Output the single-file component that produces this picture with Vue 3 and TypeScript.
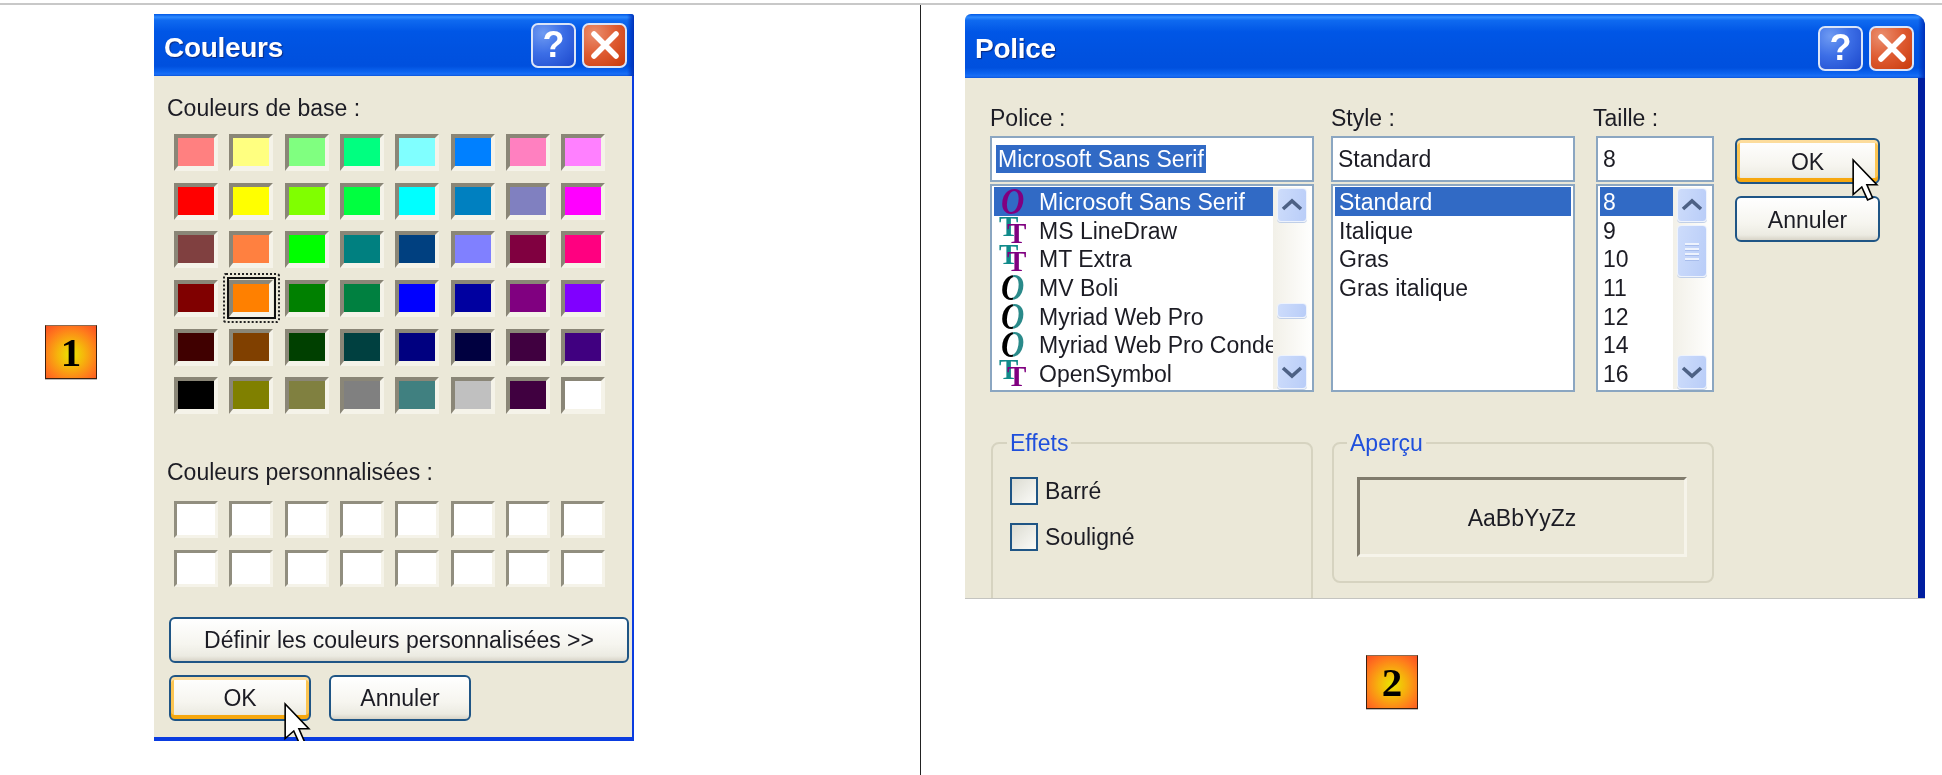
<script setup lang="ts">
interface FontRow { name: string; kind: 'o' | 't' }

const basics: string[] = [
  '#ff8080', '#ffff80', '#80ff80', '#00ff80', '#80ffff', '#0080ff', '#ff80c0', '#ff80ff',
  '#ff0000', '#ffff00', '#80ff00', '#00ff40', '#00ffff', '#0080c0', '#8080c0', '#ff00ff',
  '#804040', '#ff8040', '#00ff00', '#008080', '#004080', '#8080ff', '#800040', '#ff0080',
  '#800000', '#ff8000', '#008000', '#008040', '#0000ff', '#0000a0', '#800080', '#8000ff',
  '#400000', '#804000', '#004000', '#004040', '#000080', '#000040', '#400040', '#400080',
  '#000000', '#808000', '#808040', '#808080', '#408080', '#c0c0c0', '#400040', '#ffffff'
]
const selectedSwatch = 25
const customs: number[] = Array.from({ length: 16 }, (_, i) => i)

const fonts: FontRow[] = [
  { name: 'Microsoft Sans Serif', kind: 'o' },
  { name: 'MS LineDraw', kind: 't' },
  { name: 'MT Extra', kind: 't' },
  { name: 'MV Boli', kind: 'o' },
  { name: 'Myriad Web Pro', kind: 'o' },
  { name: 'Myriad Web Pro Condensed', kind: 'o' },
  { name: 'OpenSymbol', kind: 't' }
]
const styles: string[] = ['Standard', 'Italique', 'Gras', 'Gras italique']
const sizes: string[] = ['8', '9', '10', '11', '12', '14', '16']
</script>

<template>
  <div class="page">
    <div class="frame">
      <section class="side side-left">
        <div class="badge badge-one">1</div>

        <div class="dialog dialog-color">
          <header class="title title-color">
            <span class="title-text">Couleurs</span>
            <span class="caption-btn help">?</span>
            <span class="caption-btn close">
              <svg viewBox="0 0 40 40" width="40" height="40"><path d="M9 9 31 31M31 9 9 31" /></svg>
            </span>
          </header>
          <div class="body body-color">
            <div class="label">Couleurs de base :</div>
            <div class="swatches first">
              <div
                v-for="(c, i) in basics"
                :key="i"
                class="swatch"
                :class="{ picked: i === selectedSwatch }"
                :style="{ backgroundColor: c }"
              ></div>
            </div>
            <div class="label second">Couleurs personnalisées :</div>
            <div class="swatches custom">
              <div v-for="i in customs" :key="i" class="swatch blank"></div>
            </div>
            <button class="xp wide">Définir les couleurs personnalisées &gt;&gt;</button>
            <div class="actions">
              <button class="xp default small">OK</button>
              <button class="xp small">Annuler</button>
            </div>
          </div>
          <svg class="cursor cursor-left" viewBox="-1 -1 13 21" width="28" height="49">
            <path d="M0 0V16L4 12.5 6.7 18.5 9 17.5 6.4 11.5H11Z" />
          </svg>
        </div>
      </section>

      <section class="side side-right">
        <div class="dialog dialog-font">
          <header class="title title-font">
            <span class="title-text">Police</span>
            <span class="caption-btn help">?</span>
            <span class="caption-btn close">
              <svg viewBox="0 0 40 40" width="40" height="40"><path d="M9 9 31 31M31 9 9 31" /></svg>
            </span>
          </header>
          <div class="body body-font">
            <div class="columns">
              <div class="col col-font">
                <div class="label">Police :</div>
                <div class="input"><span class="hl">Microsoft Sans Serif</span></div>
                <div class="list">
                  <div class="rows">
                    <div v-for="(f, i) in fonts" :key="f.name" class="row font-row" :class="{ on: i === 0 }">
                      <span class="ficon">
                        <span v-if="f.kind === 'o'" class="ot" :class="{ purple: i === 0 }">O</span>
                        <template v-else><span class="tt a">T</span><span class="tt b">T</span></template>
                      </span>
                      <span class="fname">{{ f.name }}</span>
                    </div>
                  </div>
                  <div class="sb">
                    <span class="sb-btn up"><svg viewBox="0 0 22 14" width="22" height="14"><path d="M2 11 11 3 20 11" /></svg></span>
                    <span class="thumb thumb-font"></span>
                    <span class="sb-btn down"><svg viewBox="0 0 22 14" width="22" height="14"><path d="M2 3 11 11 20 3" /></svg></span>
                  </div>
                </div>
              </div>

              <div class="col col-style">
                <div class="label">Style :</div>
                <div class="input"><span class="plain">Standard</span></div>
                <div class="list">
                  <div class="rows">
                    <div v-for="(s, i) in styles" :key="s" class="row style-row" :class="{ on: i === 0 }">{{ s }}</div>
                  </div>
                </div>
              </div>

              <div class="col col-size">
                <div class="label shift">Taille :</div>
                <div class="input"><span class="plain tight">8</span></div>
                <div class="list">
                  <div class="rows">
                    <div v-for="(s, i) in sizes" :key="s" class="row size-row" :class="{ on: i === 0 }">{{ s }}</div>
                  </div>
                  <div class="sb">
                    <span class="sb-btn up"><svg viewBox="0 0 22 14" width="22" height="14"><path d="M2 11 11 3 20 11" /></svg></span>
                    <span class="thumb thumb-size"><i></i><i></i><i></i><i></i></span>
                    <span class="sb-btn down"><svg viewBox="0 0 22 14" width="22" height="14"><path d="M2 3 11 11 20 3" /></svg></span>
                  </div>
                </div>
              </div>

              <div class="col col-btn">
                <button class="xp default side-btn">OK</button>
                <button class="xp side-btn">Annuler</button>
              </div>
            </div>

            <div class="groups">
              <fieldset class="group effects">
                <legend>Effets</legend>
                <label class="check first-check"><span class="box"></span>Barré</label>
                <label class="check"><span class="box"></span>Souligné</label>
              </fieldset>
              <fieldset class="group preview-group">
                <legend>Aperçu</legend>
                <div class="preview">AaBbYyZz</div>
              </fieldset>
            </div>
          </div>
          <svg class="cursor cursor-right" viewBox="-1 -1 13 21" width="28" height="49">
            <path d="M0 0V16L4 12.5 6.7 18.5 9 17.5 6.4 11.5H11Z" />
          </svg>
        </div>
        <div class="badge badge-two">2</div>
      </section>
    </div>
  </div>
</template>

<style>
html, body { margin: 0; background: #fff; }
</style>

<style scoped>
.page {
  width: 1942px;
  height: 775px;
  padding-top: 3px;
  box-sizing: border-box;
  overflow: hidden;
  background: #fff;
  font-family: "Liberation Sans", Arial, sans-serif;
  font-size: 23px;
  color: #1c1c24;
}
.frame {
  display: flex;
  height: 772px;
  border-top: 2px solid #c8c8c8;
}
.side { box-sizing: border-box; }
.side-left {
  width: 921px;
  display: flex;
  align-items: flex-start;
  border-right: 1px solid #222;
  padding: 9px 0 0 45px;
}
.side-right {
  flex: 1;
  padding: 9px 0 0 44px;
}
.badge {
  box-sizing: border-box;
  width: 52px;
  height: 54px;
  border: 1px solid #3a2010;
  border-top-color: #8a6a50;
  background: radial-gradient(circle at 50% 55%, #e9e600 0, #f6b40c 35%, #ff7a1c 70%, #fb4f22 100%);
  color: #000;
  font-family: "Liberation Serif", serif;
  font-weight: 700;
  font-size: 41px;
  line-height: 52px;
  text-align: center;
  box-shadow: 0 1px 0 #bbb;
  filter: blur(.3px);
}
.badge-one { margin-top: 311px; margin-right: 57px; flex: none; }
.badge-two { margin: 56px 0 0 401px; }

.dialog {
  position: relative;
  overflow: hidden;
  flex: none;
  background: #ebe8d8;
  filter: blur(.5px);
}
.dialog-color { width: 480px; height: 727px; border-top-right-radius: 3px; }
.dialog-font { width: 960px; height: 585px; border-radius: 6px 12px 0 0; border-bottom: 1px solid #c4c4c0; box-sizing: border-box; }

.title {
  display: flex;
  align-items: center;
  box-sizing: border-box;
  background:
    linear-gradient(to left, #0030b8 0, rgba(0, 48, 184, 0) 7px),
    linear-gradient(180deg, #0058e6 0, #2f8bff 5%, #0f6af0 10%, #0056e6 28%, #0052e0 60%, #0050de 84%, #0c64f0 93%, #1a6ff6 97%, #0a55dc 100%);
  color: #fff;
}
.title-color { height: 62px; padding: 0 7px 0 10px; }
.title-font { height: 64px; padding: 4px 11px 0 10px; }
.title-text {
  flex: 1;
  font-weight: 700;
  font-size: 28px;
  letter-spacing: -.3px;
  padding-top: 6px;
  text-shadow: 1px 1px 1px #0a2a80;
}
.title-font .title-text { padding-top: 2px; }
.caption-btn {
  box-sizing: border-box;
  width: 45px;
  height: 45px;
  border: 2px solid #dbe5f8;
  border-radius: 7px;
  display: flex;
  align-items: center;
  justify-content: center;
  color: #fff;
}
.help {
  margin-right: 6px;
  font-weight: 700;
  font-size: 36px;
  background: radial-gradient(circle at 25% 20%, #6f9bf2 0, #3c6ee6 45%, #1c48cc 100%);
}
.close {
  background: radial-gradient(circle at 25% 20%, #ea8e6e 0, #de5a30 50%, #c83a0c 100%);
}
.close path { fill: none; stroke: #fff; stroke-width: 5.5; stroke-linecap: round; }

.body { box-sizing: border-box; }
.body-color {
  height: 665px;
  padding: 18px 0 0 13px;
  border-right: 2px solid #0a3ce0;
  border-bottom: 4px solid #0a3ce0;
}
.label { height: 28px; line-height: 28px; }
.swatches {
  display: grid;
  grid-template-columns: repeat(8, 44px);
  grid-auto-rows: 37px;
  column-gap: 11.33px;
  row-gap: 11.67px;
  margin-left: 7px;
}
.first { margin-top: 12px; }
.second { margin-top: 44px; }
.custom { margin-top: 14.7px; }
.swatch {
  position: relative;
  box-sizing: border-box;
  border-style: solid;
  border-width: 4px 4px 5px 4px;
  border-color: #8a8677 #f5f3e9 #f5f3e9 #8a8677;
  background-clip: padding-box;
}
.blank { background: #fff; border-width: 3px; border-color: #918e7f #f5f3e9 #f5f3e9 #918e7f; }
.picked::before {
  content: "";
  position: absolute;
  inset: -7px -6.3px -6.7px -6.3px;
  border: 2px solid #111;
}
.picked::after {
  content: "";
  position: absolute;
  inset: -11.3px -10.6px -10.7px -10.6px;
  border: 2px dotted #222;
  border-radius: 3px;
}
.xp {
  box-sizing: border-box;
  font: inherit;
  color: inherit;
  padding: 2px 0 0;
  border: 2px solid #1f5585;
  border-radius: 6px;
  background: linear-gradient(180deg, #fff 0, #f6f5ef 60%, #ecebe2 88%, #d8d4c8 100%);
}
.xp.default {
  box-shadow: inset 0 3px #fcdc9c, inset 0 -4px #f6a70e, inset 3px 0 #fbc553, inset -3px 0 #fbc553;
}
.wide { display: block; width: 460px; height: 46px; margin: 30px 0 0 2px; }
.actions { display: flex; gap: 18px; margin: 12px 0 0 2px; }
.small { width: 142px; height: 46px; }

.cursor { position: absolute; overflow: visible; }
.cursor path { fill: #fff; stroke: #000; stroke-width: .75; stroke-linejoin: miter; }
.cursor-left { left: 129px; top: 686px; }
.cursor-right { left: 886px; top: 142px; }

.body-font {
  height: 520px;
  padding: 26px 0 0 25px;
  border-right: 7px solid;
  border-image: linear-gradient(to right, #0a44e0, #001ea0) 1;
  border-top: 0;
  border-bottom: 0;
  border-left: 0;
}
.columns { display: flex; align-items: flex-start; }
.col-font { width: 324px; }
.col-style { width: 244px; margin-left: 17px; }
.col-size { width: 118px; margin-left: 21px; }
.col-btn { width: 145px; margin-left: 21px; padding-top: 34px; }
.shift { margin-left: -3px; }
.input {
  box-sizing: border-box;
  height: 46px;
  margin-top: 4px;
  border: 2px solid #8ba6c1;
  background: #fff;
  display: flex;
  align-items: center;
  padding-left: 4px;
}
.hl { background: #316ac5; color: #fff; padding: 0 2px; height: 28px; line-height: 28px; }
.plain { padding-left: 1px; }
.plain.tight { padding-left: 1px; }
.list {
  box-sizing: border-box;
  display: flex;
  height: 208px;
  margin-top: 2px;
  padding: 1px 2px;
  border: 2px solid #8ba6c1;
  background: #fff;
}
.rows { flex: 1; min-width: 0; overflow: hidden; }
.row { height: 28.7px; line-height: 30.6px; white-space: nowrap; }
.row.on { background: #316ac5; color: #fff; }
.style-row { padding-left: 4px; }
.size-row { padding-left: 3px; }
.font-row { display: flex; }
.ficon { position: relative; flex: none; width: 45px; height: 28.7px; }
.ot {
  position: absolute;
  left: 7px;
  top: -5px;
  font: italic 700 38px/38px "Liberation Serif", serif;
  transform: scaleX(.85);
  transform-origin: left center;
  background: linear-gradient(90deg, #000 50%, #2a8a8a 50%);
  -webkit-background-clip: text;
  background-clip: text;
  color: transparent;
}
.ot.purple { background: none; color: #800080; }
.tt {
  position: absolute;
  font: 700 29px/33px "Liberation Serif", serif;
}
.tt.a { left: 5px; top: -6px; color: #108a8a; }
.tt.b { left: 13px; top: 1px; color: #800080; }

.sb {
  flex: none;
  width: 37px;
  display: flex;
  flex-direction: column;
  align-items: flex-start;
  padding-left: 4px;
  box-sizing: border-box;
  background: linear-gradient(90deg, #f2f0e8, #fefefd);
}
.sb-btn, .thumb {
  box-sizing: border-box;
  width: 30px;
  border-radius: 4px;
  border: 1px solid #eef3fd;
  background: linear-gradient(100deg, #cddcfb, #b9cdf8);
  box-shadow: 0 1px 0 #c0cfe8;
}
.sb-btn { display: flex; align-items: center; justify-content: center; height: 34px; }
.sb-btn path { fill: none; stroke: #4d6185; stroke-width: 3.6; }
.up { margin-top: 1px; }
.down { margin-top: auto; }
.thumb { display: flex; flex-direction: column; align-items: center; justify-content: center; gap: 3px; }
.thumb i { display: block; width: 14px; height: 2px; background: #eef3fd; box-shadow: 0 1px 0 #a8bdec; }
.thumb-font { margin-top: 81px; height: 15px; }
.thumb-size { margin-top: 3px; height: 52px; }
.side-btn { display: block; width: 145px; height: 46px; }
.side-btn + .side-btn { margin-top: 12px; }

.groups { display: flex; align-items: flex-start; margin: 37px 0 0 1px; }
.group {
  box-sizing: border-box;
  margin: 0;
  padding: 0;
  border: 2px solid #d6d3c0;
  border-radius: 8px;
  min-width: 0;
}
.group legend { margin-left: 14px; padding: 0 3px; height: 28px; line-height: 28px; color: #1f4fdc; }
.effects { width: 322px; height: 300px; padding-left: 17px; }
.effects legend { margin-left: -3px; }
.preview-group { width: 382px; height: 154px; margin-left: 19px; }
.preview-group legend { margin-left: 13px; }
.check { display: flex; align-items: center; gap: 7px; height: 28px; margin-top: 18px; }
.first-check { margin-top: 20px; }
.box {
  box-sizing: border-box;
  width: 28px;
  height: 28px;
  border: 2px solid #1f5585;
  background: linear-gradient(135deg, #dcdcd2, #fbfbf8);
}
.preview {
  box-sizing: border-box;
  width: 330px;
  height: 80px;
  margin: 20px 0 0 23px;
  padding-top: 3px;
  border-style: solid;
  border-width: 3px;
  border-color: #807b6c #f6f4ea #f6f4ea #807b6c;
  display: flex;
  align-items: center;
  justify-content: center;
}
</style>
